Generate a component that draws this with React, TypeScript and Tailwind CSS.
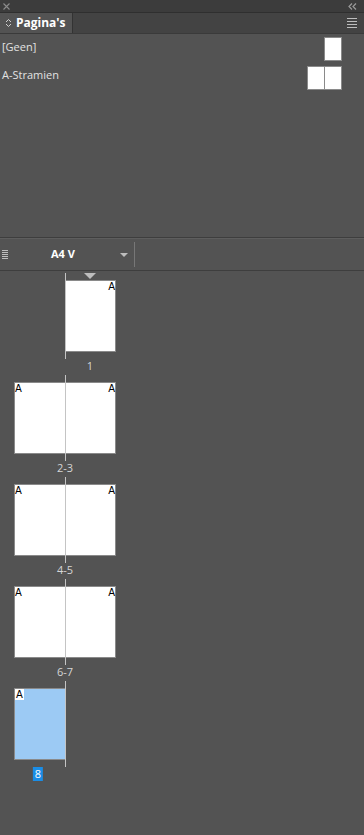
import React from "react";

const font = { fontFamily: '"Open Sans", "Liberation Sans", sans-serif' };

function Page({ a, side, selected }: { a?: boolean; side: "l" | "r"; selected?: boolean }) {
  return (
    <div
      className={`relative h-[72px] w-[51px] border border-[#8a8a8a] ${selected ? "bg-[#9ccaf4]" : "bg-white"} ${side === "l" ? "border-r-0" : "border-l-0"}`}
    >
      {a && (
        <span
          className={`absolute top-0 text-[10px] leading-[11px] text-black ${side === "l" ? "left-0" : "right-0"} ${selected ? "bg-white px-[1px]" : ""}`}
          style={{ fontFamily: '"DejaVu Sans", sans-serif' }}
        >
          A
        </span>
      )}
    </div>
  );
}

function Spread({
  left,
  right,
  label,
  labelCenter,
  selected,
  triangle,
}: {
  left?: boolean;
  right?: boolean;
  label: string;
  labelCenter: number;
  selected?: boolean;
  triangle?: boolean;
}) {
  return (
    <div className="relative h-[102px]">
      <div className="absolute left-[65px] top-0 z-10 h-[86px] w-[1px] bg-[#c4c4c4]" />
      {triangle && (
        <div className="absolute left-[84px] top-[0px] h-0 w-0 border-l-[6px] border-r-[6px] border-t-[6px] border-l-transparent border-r-transparent border-t-[#bdbdbd]" />
      )}
      <div className="flex pl-[14px] pt-[7px]">
        {left ? <Page a side="l" selected={selected} /> : <div className="w-[51px]" />}
        {right ? <Page a side="r" /> : null}
      </div>
      <div className="relative mt-[7px] h-[16px]">
        <span
          className={`absolute top-0 -translate-x-1/2 text-[11px] leading-[14px] ${selected ? "bg-[#1a8de6] px-[2px] text-white" : "text-[#d6d6d6]"}`}
          style={{ left: labelCenter }}
        >
          {label}
        </span>
      </div>
    </div>
  );
}

export default function App() {
  return (
    <div className="h-[835px] w-[364px] overflow-hidden bg-[#535353]" style={font}>
      {/* top strip */}
      <div className="flex h-[12px] items-center justify-between bg-[#3c3c3c] px-[3px]">
        <svg width="7" height="7" viewBox="0 0 7 7" fill="none" stroke="#8c8c8c" strokeWidth="1.1">
          <path d="M0.5 0.5 L6.5 6.5 M6.5 0.5 L0.5 6.5" />
        </svg>
        <svg width="9" height="7" viewBox="0 0 9 7" fill="none" stroke="#9a9a9a" strokeWidth="1.2" className="mr-[4px]">
          <path d="M4 0.5 L1 3.5 L4 6.5" />
          <path d="M8 0.5 L5 3.5 L8 6.5" />
        </svg>
      </div>
      {/* tabs */}
      <div className="flex h-[21px] border-t border-[#2f2f2f] bg-[#434343]">
        <div className="flex w-[73px] items-center gap-[4px] border-r border-[#333] bg-[#535353] pl-[5px]">
          <svg width="7" height="10" viewBox="0 0 7 10" fill="none" stroke="#cfcfcf" strokeWidth="1">
            <path d="M1 4 L3.5 1.5 L6 4" />
            <path d="M1 6 L3.5 8.5 L6 6" />
          </svg>
          <span className="text-[12px] font-bold leading-none text-white">Pagina's</span>
        </div>
        <div className="flex-1" />
        <div className="flex flex-col justify-center gap-[2px] pr-[7px]">
          <div className="h-[1px] w-[10px] bg-[#bdbdbd]" />
          <div className="h-[1px] w-[10px] bg-[#bdbdbd]" />
          <div className="h-[1px] w-[10px] bg-[#bdbdbd]" />
          <div className="h-[1px] w-[10px] bg-[#bdbdbd]" />
        </div>
      </div>
      {/* masters */}
      <div className="h-[204px] border-t border-[#3a3a3a] pt-[3px]">
        <div className="flex h-[29px] items-start justify-between pl-[2px] pr-[22px]">
          <span className="mt-[2px] text-[11px] leading-[15px] text-[#e2e2e2]">[Geen]</span>
          <div className="h-[24px] w-[18px] border border-[#8a8a8a] bg-white" />
        </div>
        <div className="flex h-[29px] items-start justify-between pl-[2px] pr-[22px]">
          <span className="mt-[1px] text-[11px] leading-[15px] text-[#e2e2e2]">A-Stramien</span>
          <div className="flex">
            <div className="h-[24px] w-[18px] border border-[#8a8a8a] bg-white" />
            <div className="h-[24px] w-[17px] border border-l-0 border-[#8a8a8a] bg-white" />
          </div>
        </div>
      </div>
      {/* divider */}
      <div className="h-[1px] bg-[#3e3e3e]" />
      <div className="h-[1px] bg-[#5e5e5e]" />
      {/* toolbar */}
      <div className="flex h-[32px] items-center border-b border-[#3e3e3e]">
        <div className="ml-[2px] flex flex-col gap-[1px]">
          <div className="h-[1px] w-[6px] bg-[#bdbdbd]" />
          <div className="h-[1px] w-[6px] bg-[#bdbdbd]" />
          <div className="h-[1px] w-[6px] bg-[#bdbdbd]" />
          <div className="h-[1px] w-[6px] bg-[#bdbdbd]" />
          <div className="h-[1px] w-[6px] bg-[#bdbdbd]" />
        </div>
        <span className="ml-[43px] text-[11px] font-bold text-white">A4 V</span>
        <div className="ml-[45px] h-0 w-0 border-l-[4px] border-r-[4px] border-t-[4px] border-l-transparent border-r-transparent border-t-[#bdbdbd]" />
        <div className="ml-[6px] h-[25px] w-[1px] bg-[#777]" />
      </div>
      {/* pages */}
      <div className="pt-[2px]">
        <Spread right label="1" labelCenter={90} triangle />
        <Spread left right label="2-3" labelCenter={65} />
        <Spread left right label="4-5" labelCenter={65} />
        <Spread left right label="6-7" labelCenter={65} />
        <Spread left label="8" labelCenter={38} selected />
      </div>
    </div>
  );
}
